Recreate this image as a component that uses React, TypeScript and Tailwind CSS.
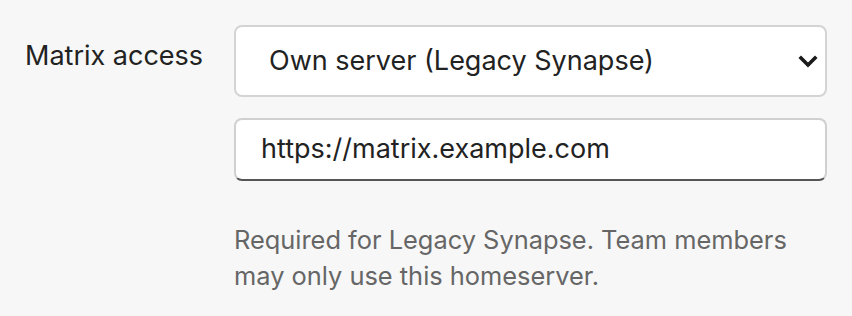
import React from "react";

export default function App() {
  return (
    <div className="w-[852px] h-[316px] bg-[#f7f7f7] font-['Inter',sans-serif] text-[#222]">
      <div className="flex pl-[25px] pt-[25px]">
        <label className="w-[209px] pt-[15px] text-[27px] leading-[32px] text-[#222]">
          Matrix access
        </label>
        <div className="w-[593px] flex flex-col">
          <div className="relative h-[72px] rounded-[8px] border-2 border-[#d4d4d4] bg-white flex items-center">
            <span className="pl-[33px] text-[27px] text-[#222]">Own server (Legacy Synapse)</span>
            <svg className="absolute right-[7px] top-[28px]" width="20" height="13" viewBox="0 0 20 13">
              <path d="M3 3 L10 10 L17 3" fill="none" stroke="#1a1a1a" strokeWidth="3.6" strokeLinecap="square" />
            </svg>
          </div>
          <div className="mt-[21px] h-[63px] rounded-[8px] border-2 border-[#d0d0d0] border-b-[#555] bg-white flex items-center">
            <span className="pl-[25px] text-[27px] text-[#222]">https://matrix.example.com</span>
          </div>
          <p className="mt-[41px] text-[25.4px] leading-[36px] text-[#666]">
            Required for Legacy Synapse. Team members
            <br />
            may only use this homeserver.
          </p>
        </div>
      </div>
    </div>
  );
}
